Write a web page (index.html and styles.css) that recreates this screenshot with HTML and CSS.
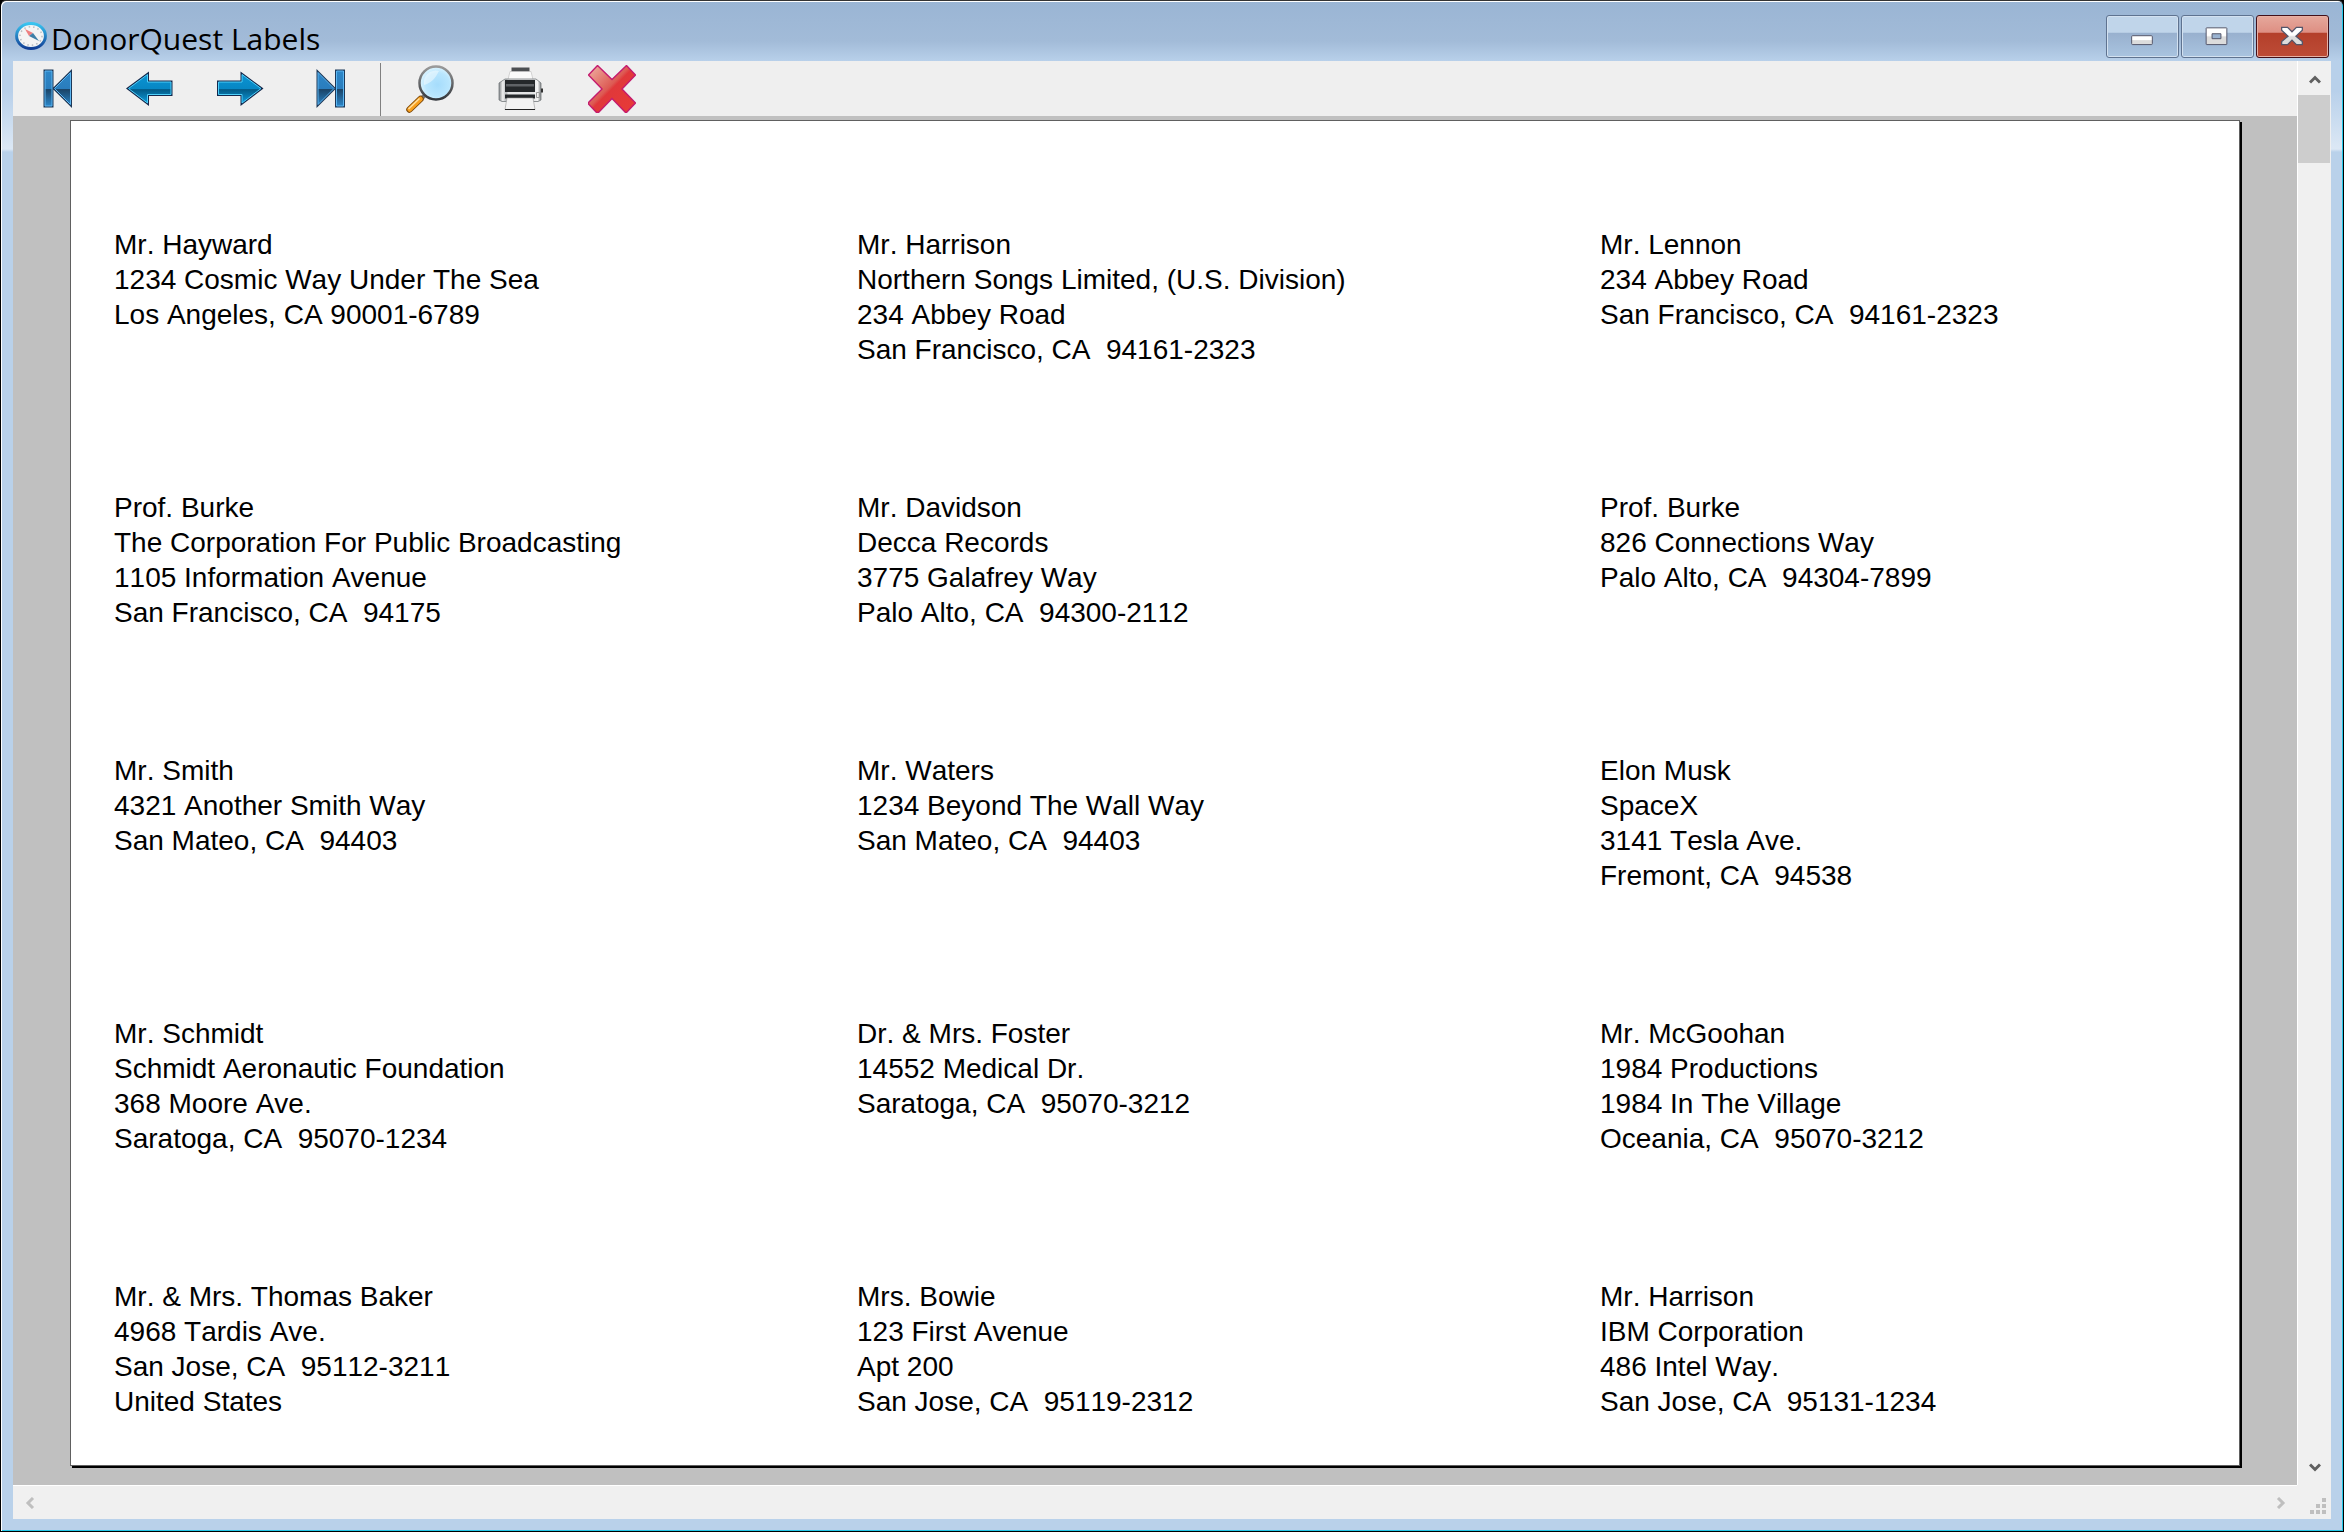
FILE: index.html
```html
<!DOCTYPE html>
<html lang="en">
<head>
<meta charset="utf-8">
<title>DonorQuest Labels</title>
<link rel="stylesheet" href="styles.css">
</head>
<body>
<div class="window">
  <header class="titlebar">
    <svg class="app-icon" viewBox="0 0 32 28">
      <defs><linearGradient id="ring" x1="0" y1="0" x2="0" y2="1"><stop offset="0" stop-color="#38c4f0"/><stop offset="1" stop-color="#123f96"/></linearGradient></defs>
      <ellipse cx="16" cy="14" rx="14.4" ry="12.4" fill="#f4f4f4" stroke="url(#ring)" stroke-width="3"/>
      <ellipse cx="16" cy="14" rx="11" ry="9.2" fill="none" stroke="#b9bcc0" stroke-width="1.5" stroke-dasharray="1.5 3"/>
      <path d="M10 7l8 4-4 3z" fill="#ee7f80"/><path d="M14 14l4-3 6 8z" fill="#3f7fa8"/>
    </svg>
    <h1 class="title">DonorQuest Labels</h1>
    <div class="controls">
      <button class="control" aria-label="Minimize"><svg viewBox="0 0 72 42"><defs><linearGradient id="glyph" x1="0" y1="0" x2="0" y2="1"><stop offset=".45" stop-color="#fff"/><stop offset=".55" stop-color="#dcdcdc"/></linearGradient></defs><rect x="25" y="20" width="21" height="9" rx="1" fill="url(#glyph)" stroke="#54566a"/></svg></button>
      <button class="control" aria-label="Maximize"><svg viewBox="0 0 72 42"><path fill-rule="evenodd" d="M25 12h20q.5 0 .5.5v16q0 .5-.5.500H25q-.5 0-.5-.500v-16q0-.5.5-.500zM30.500 18v5h9v-5z" fill="url(#glyph)" stroke="#54566a"/></svg></button>
      <button class="control close" aria-label="Close"><svg viewBox="0 0 72 42"><path d="M25 11.500h6l4.500 4.500 4.500-4.500h6v3L39.500 20.500l6.500 5.500v3h-6l-4.500-4.500L31 29h-6v-3l6.500-5.500-6.500-6z" fill="url(#glyph)" stroke="#54566a" stroke-width="1.300"/></svg></button>
    </div>
  </header>
  <div class="client">
    <div class="main">
      <div class="toolbar" role="toolbar" aria-label="Preview">
        <button class="tool" aria-label="First page"><svg viewBox="0 0 48 48"><defs>
          <linearGradient id="blue" x1="0" y1="0" x2="0" y2="1"><stop offset="0" stop-color="#2e87c8"/><stop offset=".5" stop-color="#2a7dbd"/><stop offset=".53" stop-color="#1b4467"/><stop offset="1" stop-color="#2b86c9"/></linearGradient>
          <linearGradient id="arrow" x1="0" y1="0" x2="0" y2="1"><stop offset="0" stop-color="#0b93d2"/><stop offset=".5" stop-color="#0787c4"/><stop offset=".53" stop-color="#035a86"/><stop offset="1" stop-color="#0d9bdc"/></linearGradient></defs>
          <path d="M11 6h7v35h-7zM36.500 7.500v32L20.500 23.500z" fill="none" stroke="#1d3858" stroke-width="3"/><path d="M11 6h7v35h-7zM36.500 7.500v32L20.500 23.500z" fill="url(#blue)" stroke="#5cb6f2"/></svg></button>
        <button class="tool" aria-label="Previous page"><svg viewBox="0 0 48 48"><path d="M3.500 23.500L22.500 9.500v7.500h23.500v12.500h-23.500v8.500z" fill="none" stroke="#14294d" stroke-width="3"/><path d="M3.500 23.500L22.500 9.500v7.500h23.500v12.500h-23.500v8.500z" fill="url(#arrow)" stroke="#4fd0fa"/></svg></button>
        <button class="tool" aria-label="Next page"><svg viewBox="0 0 48 48"><path d="M45 23.500L26 9.500v7.500H2.500v12.500H26v8.500z" fill="none" stroke="#14294d" stroke-width="3"/><path d="M45 23.500L26 9.500v7.500H2.500v12.500H26v8.500z" fill="url(#arrow)" stroke="#4fd0fa"/></svg></button>
        <button class="tool" aria-label="Last page"><svg viewBox="0 0 48 48"><path d="M29.500 6h7v35h-7zM11 7.500v32l16-16z" fill="none" stroke="#1d3858" stroke-width="3"/><path d="M29.500 6h7v35h-7zM11 7.500v32l16-16z" fill="url(#blue)" stroke="#5cb6f2"/></svg></button>
        <span class="divider"></span>
        <button class="tool" aria-label="Zoom"><svg viewBox="0 0 48 48"><defs><radialGradient id="lens" cx=".55" cy=".55" r=".6"><stop offset="0" stop-color="#a5dcfc"/><stop offset=".6" stop-color="#b9e6fe"/><stop offset="1" stop-color="#e8f9ff"/></radialGradient><linearGradient id="rim" x1="0" y1="0" x2="0" y2="1"><stop offset="0" stop-color="#9a9a9a"/><stop offset="1" stop-color="#33373c"/></linearGradient></defs>
          <path d="M20 29l-4 4" stroke="#777" stroke-width="4"/><path d="M14.500 34L3.500 44.500" stroke="#7d4a0c" stroke-width="6.500" stroke-linecap="round"/><path d="M14.500 34L3.500 44.500" stroke="#f9a01e" stroke-width="4.500" stroke-linecap="round"/><path d="M13.500 33.500L2.500 44" stroke="#ffe0a0" stroke-width="1.500"/>
          <circle cx="30" cy="18" r="16.500" fill="url(#lens)" stroke="url(#rim)" stroke-width="2.500"/><path d="M18 20a12 12 0 0 1 15-14c-4 8-8 12-15 14z" fill="#fff" opacity=".45"/></svg></button>
        <button class="tool" aria-label="Print"><svg viewBox="0 0 48 48"><defs><linearGradient id="casing" x1="0" y1="0" x2="1" y2="0"><stop offset="0" stop-color="#7f8386"/><stop offset=".09" stop-color="#f0f0f0"/><stop offset=".17" stop-color="#b4b7ba"/><stop offset=".22" stop-color="#e4e5e6"/><stop offset=".82" stop-color="#e4e5e6"/><stop offset=".92" stop-color="#f4f4f4"/><stop offset="1" stop-color="#7f8386"/></linearGradient></defs>
          <path d="M14.500 2.500h18v6h-18z" fill="#4c4f52"/><path d="M13 6.500h21l2 8H11z" fill="#fafafa" stroke="#c4c4c4" stroke-width=".7"/>
          <path d="M2 18l6-4h31l5 4v17l-3 1.500H5L2 35z" fill="url(#casing)" stroke="#74787b" stroke-width=".8"/><path d="M44 23.500h2v4h-2z" fill="#333"/>
          <path d="M8 15h30v12H8zM8 29.500h30v4H8z" fill="#25282b"/><path d="M9 19h28v2.500H9z" fill="#606367"/><path d="M10 33h26l2 11.500H8z" fill="#f3f3f3" stroke="#999" stroke-width=".6"/><path d="M8 44.500h30" stroke="#222"/><path d="M39.500 27.500h3v5h-3z" fill="none" stroke="#999"/></svg></button>
        <button class="tool" aria-label="Close preview"><svg viewBox="0 0 48 48"><defs><linearGradient id="red" x1="0" y1="0" x2="1" y2="1"><stop offset="0" stop-color="#efb3a5"/><stop offset=".45" stop-color="#dd5a53"/><stop offset=".5" stop-color="#e0383a"/><stop offset="1" stop-color="#e93a37"/></linearGradient></defs>
          <path d="M9.500.5L24 14.500 38.500.5l9 9.500L34 24l13.500 14-9 9.500h-1L24 33.500 10.500 47.500h-2L.5 39V37.500L14 24 .5 10z" fill="url(#red)" stroke="#c41b6e" stroke-width="1.400"/></svg></button>
      </div>
      <div class="desk">
        <main class="sheet">
          <address class="label">Mr. Hayward
1234 Cosmic Way Under The Sea
Los Angeles, CA 90001-6789</address>
          <address class="label">Mr. Harrison
Northern Songs Limited, (U.S. Division)
234 Abbey Road
San Francisco, CA  94161-2323</address>
          <address class="label">Mr. Lennon
234 Abbey Road
San Francisco, CA  94161-2323</address>
          <address class="label">Prof. Burke
The Corporation For Public Broadcasting
1105 Information Avenue
San Francisco, CA  94175</address>
          <address class="label">Mr. Davidson
Decca Records
3775 Galafrey Way
Palo Alto, CA  94300-2112</address>
          <address class="label">Prof. Burke
826 Connections Way
Palo Alto, CA  94304-7899</address>
          <address class="label">Mr. Smith
4321 Another Smith Way
San Mateo, CA  94403</address>
          <address class="label">Mr. Waters
1234 Beyond The Wall Way
San Mateo, CA  94403</address>
          <address class="label">Elon Musk
SpaceX
3141 Tesla Ave.
Fremont, CA  94538</address>
          <address class="label">Mr. Schmidt
Schmidt Aeronautic Foundation
368 Moore Ave.
Saratoga, CA  95070-1234</address>
          <address class="label">Dr. &amp; Mrs. Foster
14552 Medical Dr.
Saratoga, CA  95070-3212</address>
          <address class="label">Mr. McGoohan
1984 Productions
1984 In The Village
Oceania, CA  95070-3212</address>
          <address class="label">Mr. &amp; Mrs. Thomas Baker
4968 Tardis Ave.
San Jose, CA  95112-3211
United States</address>
          <address class="label">Mrs. Bowie
123 First Avenue
Apt 200
San Jose, CA  95119-2312</address>
          <address class="label">Mr. Harrison
IBM Corporation
486 Intel Way.
San Jose, CA  95131-1234</address>
        </main>
      </div>
    </div>
    <div class="vscroll">
      <button class="step" aria-label="Scroll up"><svg viewBox="0 0 12 12"><path d="M1 10.500L6 5.500l5 5" fill="none" stroke="#606060" stroke-width="3"/></svg></button>
      <div class="thumb"></div>
      <button class="step" aria-label="Scroll down"><svg viewBox="0 0 12 12"><path d="M1 2.500l5 5 5-5" fill="none" stroke="#606060" stroke-width="3"/></svg></button>
    </div>
    <div class="hscroll">
      <button class="step" aria-label="Scroll left"><svg viewBox="0 0 12 12"><path d="M9 1L4 6l5 5" fill="none" stroke="#bfbfbf" stroke-width="3"/></svg></button>
      <button class="step" aria-label="Scroll right"><svg viewBox="0 0 12 12"><path d="M3 1l5 5-5 5" fill="none" stroke="#bfbfbf" stroke-width="3"/></svg></button>
    </div>
    <div class="grip"><svg viewBox="0 0 16 16"><path d="M12 0h4v4h-4zM6 6h4v4H6zM12 6h4v4h-4zM0 12h4v4H0zM6 12h4v4H6zM12 12h4v4h-4z" fill="#bfbfbf"/></svg></div>
  </div>
</div>
</body>
</html>
```
FILE: styles.css
```css
* { box-sizing: border-box; }

body {
  margin: 0;
  background: #000;
  font-family: "Liberation Sans", Arial, sans-serif;
  color: #000;
}

button {
  margin: 0;
  padding: 0;
  border: 0;
  background: none;
}

svg { display: block; }

.window {
  min-height: 100vh;
  display: flex;
  flex-direction: column;
  padding: 1px 11px 12px;
  border: 1px solid #000;
  border-top-color: #333;
  border-radius: 6px 6px 0 0;
  background:
    linear-gradient(#9ab5d4 0, #a2bbd8 40px, #b8d0ea 60px, #b8d0ea 90px, #dce8f5 148px, #b9d1ea 151px);
  box-shadow: inset 1px 1px #fff, inset -1px -1px #23c8e8;
}

.titlebar {
  display: flex;
  align-items: flex-start;
  height: 59px;
  padding-left: 3px;
}

.app-icon {
  width: 32px;
  height: 28px;
  margin-top: 20px;
}

.title {
  flex: 1;
  margin: 15px 0 0 4px;
  font: 400 30px/44px "Open Sans", "Noto Sans", sans-serif;
}

.controls {
  display: flex;
  gap: 2px;
  padding: 13px 3px 0 0;
}

.control {
  width: 73px;
  height: 43px;
  border: 1px solid #5f7390;
  border-radius: 3px;
  background: linear-gradient(#c0d5ea 0 40%, #98b0ce 41%, #a9c4e0);
  box-shadow: inset 0 0 0 1px #d3e1f0;
}

.close {
  border-color: #43101a;
  background: linear-gradient(#e6a89c, #de8f83 40%, #b43f2a 41%, #bd4c37);
  box-shadow: inset 0 0 0 1px #e7b0a4;
}

.client {
  flex: 1;
  display: grid;
  grid-template-columns: 1fr 34px;
  grid-template-rows: 1fr 34px;
  margin: 0 1px;
  background: #f0f0f0;
}

.main {
  display: flex;
  flex-direction: column;
}

.toolbar {
  display: flex;
  align-items: center;
  gap: 43px;
  height: 55px;
  padding-left: 21px;
  background: #efefef;
}

.tool {
  width: 48px;
  height: 48px;
}

.divider {
  align-self: stretch;
  width: 1px;
  margin: 2px -18px 0;
  background: #808080;
}

.desk {
  flex: 1;
  display: grid;
  padding: 4px 57px 19px;
  background: #c0c0c0;
}

.sheet {
  display: grid;
  grid-template-columns: 743fr 743fr 639fr;
  grid-template-rows: repeat(4, 263px) 1fr;
  padding: 106px 0 40px 43px;
  border: 1px solid #606060;
  background: #fff;
  box-shadow: 2px 2px #000;
}

.label {
  font-size: 28px;
  font-style: normal;
  font-kerning: none;
  line-height: 35px;
  white-space: pre;
}

.vscroll {
  display: flex;
  flex-direction: column;
  border-left: 1px solid #fff;
}

.hscroll {
  display: flex;
  justify-content: space-between;
  border-top: 1px solid #fff;
}

.step {
  display: grid;
  place-items: center;
  width: 33px;
  height: 34px;
}

.step svg {
  width: 12px;
  height: 12px;
}

.thumb {
  flex: none;
  width: 32px;
  height: 68px;
  margin-bottom: auto;
  background: #cdcdcd;
}

.grip {
  display: grid;
  place-content: end;
  padding: 5px;
}

.grip svg {
  width: 16px;
  height: 16px;
}
```
